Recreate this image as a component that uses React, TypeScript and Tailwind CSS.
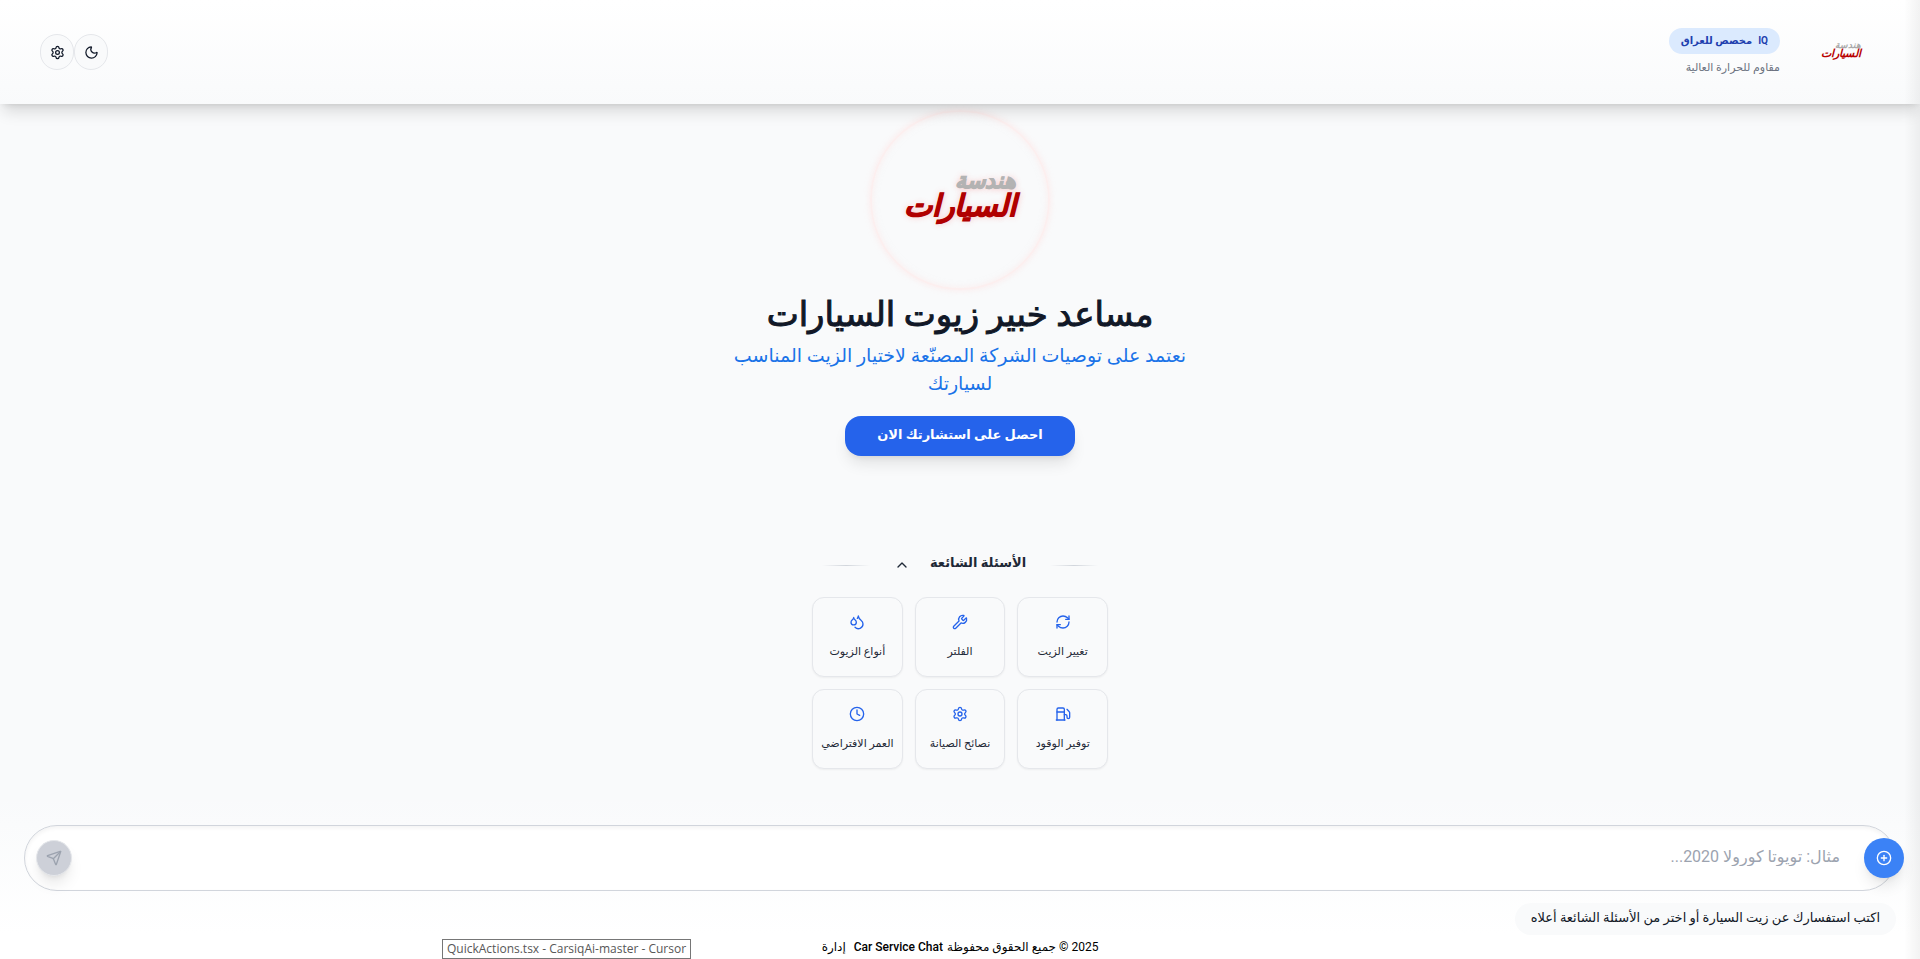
import React, { useState } from 'react';
import {
  ChevronUp,
  CirclePlus,
  Clock,
  Droplets,
  Fuel,
  Moon,
  RefreshCw,
  Send,
  Settings,
  Wrench,
  type LucideIcon,
} from 'lucide-react';

type Question = { label: string; icon: LucideIcon };

const questions: Question[] = [
  { label: 'تغيير الزيت', icon: RefreshCw },
  { label: 'الفلتر', icon: Wrench },
  { label: 'أنواع الزيوت', icon: Droplets },
  { label: 'توفير الوقود', icon: Fuel },
  { label: 'نصائح الصيانة', icon: Settings },
  { label: 'العمر الافتراضي', icon: Clock },
];

function Header() {
  const round =
    'flex h-9 w-[34px] items-center justify-center rounded-full border border-gray-200 bg-gray-50 text-gray-900';
  return (
    <header className="relative z-10 flex h-[104px] items-center justify-between bg-linear-to-b from-white to-gray-50 px-10 shadow-[0_10px_15px_-3px_rgba(0,0,0,0.14),0_4px_6px_-4px_rgba(0,0,0,0.12)]">
      <div className="flex items-center gap-5">
        <div className="flex w-20 flex-col items-center pb-1 font-bold italic" aria-label="هندسة السيارات">
          <span className="w-[42px] text-start text-[9px] leading-[8px] text-[#aaaaaa]">هندسة</span>
          <span className="w-[42px] whitespace-nowrap text-[11px] leading-[10px] text-[#b80000]">السيارات</span>
        </div>
        <div className="flex flex-col items-start gap-1 pt-0.5">
          <span className="flex h-[26px] items-center gap-1.5 rounded-full bg-[#dbeafe] px-3 pb-0.5 text-[10px] font-bold text-[#1e40af]">
            <span>IQ</span>
            <span>مخصص للعراق</span>
          </span>
          <span className="text-[11px] leading-5 text-[#6b7280]">مقاوم للحرارة العالية</span>
        </div>
      </div>
      <div className="flex items-center">
        <button type="button" aria-label="الوضع الليلي" className={round}>
          <Moon size={15} />
        </button>
        <button type="button" aria-label="الإعدادات" className={round}>
          <Settings size={15} />
        </button>
      </div>
    </header>
  );
}

function Hero() {
  return (
    <section className="flex flex-col items-center px-4 pt-[6px] text-center">
      <div className="flex size-[180px] items-center justify-center rounded-full border-2 border-[#fcefef] shadow-[0_0_6px_rgba(254,226,226,0.7),inset_0_0_6px_rgba(254,226,226,0.5)]">
        <div className="flex flex-col pb-2 font-bold italic [text-shadow:0_0_6px_rgba(248,113,113,0.45)]">
          <span className="text-start text-[22px] leading-[20px] text-[#b3b3b3] [-webkit-text-stroke:1px_#b3b3b3]">
            هندسة
          </span>
          <span className="text-[30px] leading-[30px] text-[#b00000] [-webkit-text-stroke:1px_#b00000]">
            السيارات
          </span>
        </div>
      </div>
      <h1 className="mt-1 text-[34px] leading-10 text-[#111827] [-webkit-text-stroke:1px_#111827]">
        مساعد خبير زيوت السيارات
      </h1>
      <p className="mt-2 max-w-[480px] text-[19px] leading-7 text-[#1a73e8]">
        نعتمد على توصيات الشركة المصنّعة لاختيار الزيت المناسب لسيارتك
      </p>
      <button
        type="button"
        className="mt-[18px] flex h-10 w-[230px] items-center justify-center rounded-2xl bg-[#2563eb] pb-0.5 text-[13px] font-bold text-white shadow-lg"
      >
        احصل على استشارتك الان
      </button>
    </section>
  );
}

function CommonQuestions() {
  const [open, setOpen] = useState(true);
  const rule = 'mt-1 h-px w-12 bg-linear-to-r from-transparent via-gray-300 to-transparent';
  return (
    <section className="mx-auto mt-[93px] w-[296px]">
      <div className="flex h-7 items-center justify-center gap-6">
        <span className={rule} />
        <button
          type="button"
          aria-expanded={open}
          onClick={() => setOpen(!open)}
          className="flex items-center gap-5 pt-1 text-[13px] font-bold text-[#1f2937]"
        >
          <span className="pb-1">الأسئلة الشائعة</span>
          <ChevronUp size={16} className={open ? '' : 'rotate-180'} />
        </button>
        <span className={rule} />
      </div>
      {open && (
        <div className="mt-5 grid grid-cols-3 gap-3">
          {questions.map(({ label, icon: Icon }) => (
            <button
              key={label}
              type="button"
              className="flex h-20 flex-col items-center justify-center gap-3 rounded-xl border border-[#e5e7eb] bg-gray-50 pt-0.5 shadow-xs"
            >
              <Icon size={16} className="text-[#2563eb]" />
              <span className="whitespace-nowrap text-[11px] leading-5 text-[#1f2937]">{label}</span>
            </button>
          ))}
        </div>
      )}
    </section>
  );
}

function Composer() {
  return (
    <form
      className="mt-auto bg-linear-to-b from-gray-50 to-white px-6 pt-6"
      onSubmit={(e) => e.preventDefault()}
    >
      <div className="relative flex h-[66px] items-center rounded-full border border-gray-300 bg-white pl-[11px] pr-[55px] shadow-[inset_0_2px_4px_rgba(0,0,0,0.05)]">
        <button
          type="button"
          aria-label="إضافة"
          className="absolute -right-[9px] flex size-10 items-center justify-center rounded-full bg-[#3b82f6] text-white shadow-lg"
        >
          <CirclePlus size={16} />
        </button>
        <input
          type="text"
          aria-label="رسالتك"
          placeholder="مثال: تويوتا كورولا 2020..."
          className="h-full min-w-0 flex-1 bg-transparent pb-1 text-[16px] text-gray-800 outline-none placeholder:text-[#9ca3af]"
        />
        <button
          type="submit"
          aria-label="إرسال"
          className="flex size-9 items-center justify-center rounded-full border border-gray-200 bg-[#cdd0d8] text-[#9ca3af] shadow-lg"
        >
          <Send size={16} />
        </button>
      </div>
      <p className="mt-3 flex h-8 w-fit items-center rounded-full bg-gray-50 px-4 pb-0.5 text-[13px] text-[#111827]">
        اكتب استفسارك عن زيت السيارة أو اختر من الأسئلة الشائعة أعلاه
      </p>
    </form>
  );
}

export default function App() {
  return (
    <div
      dir="rtl"
      className="relative flex min-h-screen flex-col overflow-hidden bg-gray-50 font-['Roboto','DejaVu_Sans',sans-serif]"
    >
      <Header />
      <main className="flex flex-1 flex-col">
        <Hero />
        <CommonQuestions />
        <Composer />
      </main>
      <footer className="flex h-6 items-center justify-center gap-1 bg-white text-[12px] text-black">
        <span>2025 © جميع الحقوق محفوظة</span>
        <span className="font-medium">Car Service Chat</span>
        <span className="mr-1">إدارة</span>
      </footer>
      <div
        dir="ltr"
        role="tooltip"
        className="absolute bottom-0 left-[442px] flex h-5 items-center border border-[#767676] bg-white px-1 font-['Open_Sans',sans-serif] text-[12px] text-[#575757]"
      >
        QuickActions.tsx - CarsiqAi-master - Cursor
      </div>
      <div className="pointer-events-none absolute inset-y-0 right-0 z-20 w-4 bg-linear-to-r from-transparent to-black/5" />
    </div>
  );
}
